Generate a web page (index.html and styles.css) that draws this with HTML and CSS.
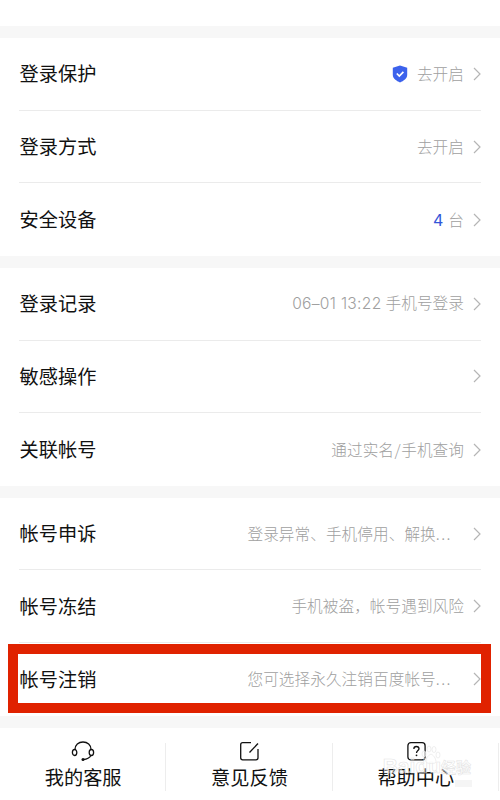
FILE: index.html
```html
<!DOCTYPE html>
<html lang="zh-CN">

<head>
    <meta charset="UTF-8">
    <meta name="viewport" content="width=device-width, initial-scale=1.0">
    <title>帐号安全</title>
    <link rel="stylesheet" href="styles.css">
</head>

<body>
    <svg class="symbols" width="0" height="0">
        <symbol id="chevron" viewBox="0 0 8 14">
            <path d="M1 1L7 7L1 13" fill="none" stroke="currentColor" stroke-width="1.2" />
        </symbol>
    </svg>

    <main class="page">
        <section class="group">
            <div class="row">
                <span class="label">登录保护</span>
                <svg class="shield" viewBox="0 0 16 18">
                    <path d="M8 0.5L15.200 2.8V10C15.200 13.5 11.5 16 8 17.4C4.500 16 0.800 13.500 0.800 10V2.800Z" fill="#3c62ec" />
                    <path d="M4.800 8.500L7.300 11L11.400 6.900" fill="none" stroke="#fff" stroke-width="1.700" />
                </svg>
                <span class="value">去开启</span>
                <svg class="chevron"><use href="#chevron" /></svg>
            </div>
            <div class="row">
                <span class="label">登录方式</span>
                <span class="value">去开启</span>
                <svg class="chevron"><use href="#chevron" /></svg>
            </div>
            <div class="row">
                <span class="label">安全设备</span>
                <span class="value"><b class="count">4</b>台</span>
                <svg class="chevron"><use href="#chevron" /></svg>
            </div>
        </section>

        <section class="group">
            <div class="row">
                <span class="label">登录记录</span>
                <span class="value"><span class="time">06–01 13:22</span>手机号登录</span>
                <svg class="chevron"><use href="#chevron" /></svg>
            </div>
            <div class="row">
                <span class="label">敏感操作</span>
                <svg class="chevron"><use href="#chevron" /></svg>
            </div>
            <div class="row">
                <span class="label">关联帐号</span>
                <span class="value">通过实名<span class="slash">/</span>手机查询</span>
                <svg class="chevron"><use href="#chevron" /></svg>
            </div>
        </section>

        <section class="group">
            <div class="row">
                <span class="label">帐号申诉</span>
                <span class="value clipped">登录异常、手机停用、解换<span class="dots">...</span></span>
                <svg class="chevron"><use href="#chevron" /></svg>
            </div>
            <div class="row">
                <span class="label">帐号冻结</span>
                <span class="value">手机被盗，帐号遇到风险</span>
                <svg class="chevron"><use href="#chevron" /></svg>
            </div>
            <div class="row">
                <span class="label">帐号注销</span>
                <span class="value clipped">您可选择永久注销百度帐号<span class="dots">...</span></span>
                <svg class="chevron"><use href="#chevron" /></svg>
                <div class="highlight"></div>
            </div>
        </section>

        <nav class="tabs">
            <a class="tab">
                <svg class="tab-icon" viewBox="0 0 24 20">
                    <g fill="none" stroke="currentColor" stroke-width="1.300">
                        <path d="M4 8.500C4 4 7.500 1 12 1S20 4 20 8.500" />
                        <ellipse cx="3.600" cy="11.500" rx="2.200" ry="3" />
                        <ellipse cx="20.400" cy="11.500" rx="2.200" ry="3" />
                        <path d="M20 14.500C18.500 17 15.500 18.300 12.500 18.500" />
                    </g>
                    <circle cx="12" cy="18.400" r="1.500" fill="currentColor" />
                </svg>
                <span>我的客服</span>
            </a>
            <a class="tab">
                <svg class="tab-icon" viewBox="0 0 24 20">
                    <g fill="none" stroke="currentColor" stroke-width="1.300">
                        <path d="M14 1.700H5.700Q3.700 1.700 3.700 3.700V16.800Q3.700 18.800 5.700 18.800H19Q21 18.800 21 16.800V8" />
                        <path d="M12.500 11.500L21 2.500" />
                    </g>
                </svg>
                <span>意见反馈</span>
            </a>
            <a class="tab">
                <svg class="tab-icon" viewBox="0 0 24 20">
                    <g fill="none" stroke="currentColor" stroke-width="1.300">
                        <rect x="3.900" y="1.700" width="17.200" height="17.200" rx="3" />
                        <path d="M9.900 8V7.700C9.900 6.300 10.900 5.500 12.300 5.500S15 6.400 15 7.800C15 9.600 12.500 9.700 12.500 12" />
                    </g>
                    <circle cx="12.500" cy="14.300" r="0.900" fill="currentColor" />
                </svg>
                <span>帮助中心</span>
                <span class="watermark">
                    <svg class="paw" viewBox="0 0 20 20">
                        <ellipse cx="3" cy="9" rx="2" ry="3" />
                        <ellipse cx="8" cy="4" rx="2" ry="3" />
                        <ellipse cx="13" cy="4.500" rx="2" ry="3" />
                        <ellipse cx="17" cy="10" rx="2" ry="3" />
                        <path d="M10 9C6 11 4 15 5 17S15 19 15 17S14 11 10 9Z" />
                    </svg>
                    Baidu<span class="watermark-cn">经验</span>
                </span>
                <span class="watermark-bar"></span>
            </a>
        </nav>
    </main>
</body>

</html>
```

FILE: styles.css
```css
* {
    margin: 0;
    padding: 0;
    box-sizing: border-box;
}

body {
    font-family: 'Noto Sans CJK SC', sans-serif;
    background: #fff;
    color: #111;
    overflow: hidden;
}

.symbols {
    display: block;
}

/* Page column, white strip on top */
.page {
    height: 800px;
    padding-top: 26px;
}

/* Groups of rows */
.group {
    border-top: 12px solid #f7f7f7;
    padding: 0 19px;
}

.row {
    position: relative;
    display: flex;
    align-items: center;
    height: 72.700px;
    border-bottom: 1px solid #ebebeb;
}

.row:last-child {
    height: 72.500px;
    border-bottom: none;
}

.label {
    font-size: 19.200px;
    line-height: 28px;
    margin-right: auto;
    padding-left: 0.600px;
    padding-bottom: 1px;
}

.value {
    font-size: 15.650px;
    font-weight: 300;
    line-height: 24px;
    letter-spacing: 0.050px;
    color: #a0a0a0;
    white-space: nowrap;
}

.clipped {
    margin-right: 12px;
}

.dots {
    letter-spacing: 1.500px;
}

.slash {
    margin: 0 0.500px;
}

.time {
    font-family: 'Inter', sans-serif;
    font-size: 15.600px;
    letter-spacing: 0.300px;
    margin-right: 4px;
}

.count {
    font-family: 'Inter', sans-serif;
    font-size: 16px;
    font-weight: 400;
    color: #3355d8;
    margin-right: 5px;
}

.shield {
    width: 16px;
    height: 18px;
    margin-right: 9px;
}

.chevron {
    width: 8px;
    height: 14px;
    margin-left: 9px;
    color: #b5b5b5;
}

/* Red frame round the last row */
.highlight {
    position: absolute;
    top: 1px;
    left: -11px;
    right: -10px;
    height: 68.500px;
    border: 10px solid #e02200;
}

/* Bottom bar */
.tabs {
    display: flex;
    border-top: 12px solid #f7f7f7;
    padding-right: 1px;
}

.tab {
    position: relative;
    flex: 1;
    display: flex;
    flex-direction: column;
    align-items: center;
    height: 72px;
    padding-top: 13px;
    font-size: 19.200px;
    line-height: 28px;
    background: linear-gradient(#ededed, #ededed) no-repeat right 15px / 1px 48px;
}

.tab-icon {
    width: 24px;
    height: 20px;
    margin-bottom: 2px;
}

/* Faint logo over the help tab */
.watermark {
    position: absolute;
    top: 26px;
    left: 50px;
    font-family: 'Liberation Sans', 'Noto Sans CJK SC', sans-serif;
    font-size: 21px;
    font-weight: bold;
    line-height: 24px;
    white-space: nowrap;
    color: rgba(255, 255, 255, 0.400);
    -webkit-text-stroke: 0.600px rgba(220, 220, 220, 0.800);
}

.watermark-cn {
    font-size: 15px;
}

.watermark-bar {
    position: absolute;
    top: 52px;
    left: 122px;
    width: 17px;
    height: 7px;
    background: #f5f5f5;
}

.paw {
    position: absolute;
    top: -9px;
    left: 38px;
    width: 20px;
    height: 20px;
    fill: rgba(255, 255, 255, 0.600);
    stroke: #e6e6e6;
    stroke-width: 0.700px;
}
```
